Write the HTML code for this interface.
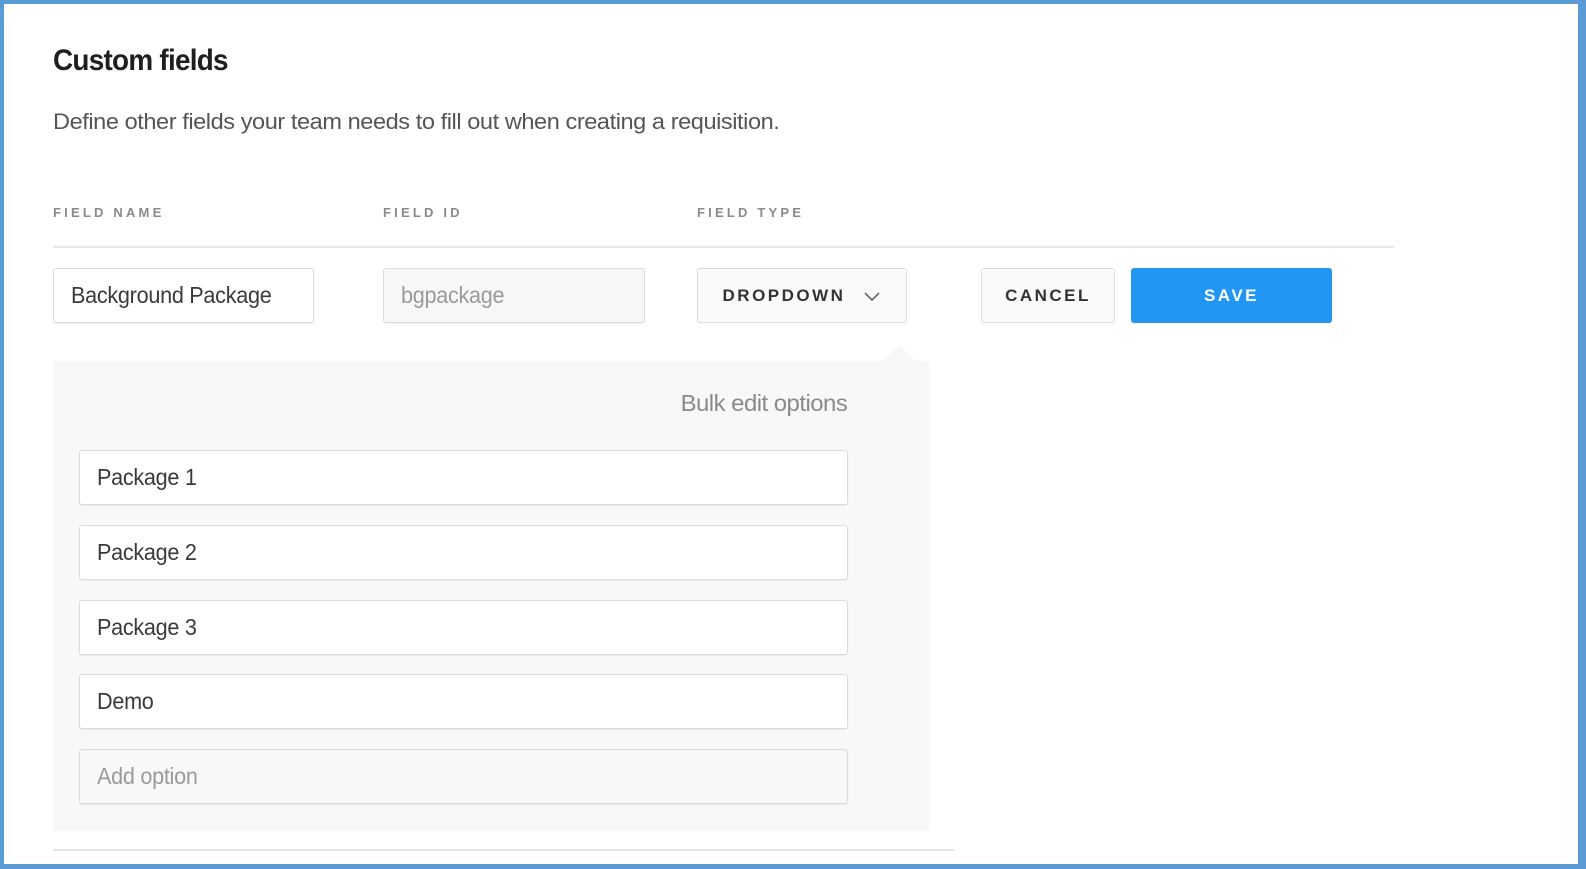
<!DOCTYPE html>
<html><head><style>
*{box-sizing:border-box;margin:0;padding:0}
html,body{width:1586px;height:869px;background:#fff;overflow:hidden;font-family:"Liberation Sans",sans-serif}
.frame{position:absolute;left:0;top:0;width:1586px;height:869px;border:solid #5b9bd5;border-width:4px 8px 5px 4px}
.a{position:absolute;white-space:nowrap}
.inp{position:absolute;border:1px solid #dcdcdc;border-radius:3px;background:#fff;box-shadow:0 1px 1px rgba(0,0,0,.06);font-size:23px;color:#3a3a3a;padding-left:17px;display:flex;align-items:center;letter-spacing:-.3px}
.inp span{display:inline-block;transform:scaleX(.94);transform-origin:left}
.hd{font-size:13px;font-weight:bold;color:#8a8a8a;letter-spacing:3.2px;top:205px}
.btn{position:absolute;border-radius:3px;display:flex;align-items:center;justify-content:center;font-size:17px;font-weight:bold;letter-spacing:2.5px}
</style></head><body>
<div class="frame"></div>
<div class="a" style="left:53px;top:44px;font-size:30px;font-weight:bold;color:#1e1e1e;letter-spacing:-.8px;transform:scaleX(.93);transform-origin:left">Custom fields</div>
<div class="a" style="left:53px;top:109px;font-size:22px;color:#555;letter-spacing:-.4px;transform:scaleX(1.07);transform-origin:left">Define other fields your team needs to fill out when creating a requisition.</div>
<div class="a hd" style="left:53px">FIELD NAME</div>
<div class="a hd" style="left:383px">FIELD ID</div>
<div class="a hd" style="left:697px">FIELD TYPE</div>
<div class="a" style="left:53px;top:246px;width:1341px;height:2px;background:#e8e8e8"></div>
<div class="inp" style="left:53px;top:268px;width:261px;height:55px"><span>Background Package</span></div>
<div class="inp" style="left:383px;top:268px;width:262px;height:55px;background:#f7f7f7;color:#9a9a9a"><span>bgpackage</span></div>
<div class="btn" style="left:697px;top:268px;width:210px;height:55px;border:1px solid #dcdcdc;background:#fafafa;color:#333">DROPDOWN<svg width="18" height="12" style="margin-left:18px" viewBox="0 0 18 12"><path d="M2 3l7 7 7-7" fill="none" stroke="#555" stroke-width="1.5"/></svg></div>
<div class="btn" style="left:981px;top:268px;width:134px;height:55px;border:1px solid #dcdcdc;background:#fafafa;color:#333">CANCEL</div>
<div class="btn" style="left:1131px;top:268px;width:201px;height:55px;background:#2196f3;color:#fff">SAVE</div>
<div class="a" style="left:53px;top:361px;width:877px;height:470px;background:#f8f8f8;border-radius:3px"></div>
<div class="a" style="left:883px;top:345px;width:0;height:0;border:16px solid transparent;border-top:0;border-bottom:16px solid #f8f8f8"></div>
<div class="a" style="right:739px;top:390px;font-size:23px;color:#8a8a8a;letter-spacing:-.5px;transform:scaleX(1.04);transform-origin:right">Bulk edit options</div>
<div class="inp" style="left:79px;top:450px;width:769px;height:55px"><span>Package 1</span></div>
<div class="inp" style="left:79px;top:525px;width:769px;height:55px"><span>Package 2</span></div>
<div class="inp" style="left:79px;top:600px;width:769px;height:55px"><span>Package 3</span></div>
<div class="inp" style="left:79px;top:674px;width:769px;height:55px"><span>Demo</span></div>
<div class="inp" style="left:79px;top:749px;width:769px;height:55px;background:#f8f8f8;color:#9a9a9a"><span>Add option</span></div>
<div class="a" style="left:53px;top:849px;width:901px;height:2px;background:#e6e6e6"></div>
</body></html>
